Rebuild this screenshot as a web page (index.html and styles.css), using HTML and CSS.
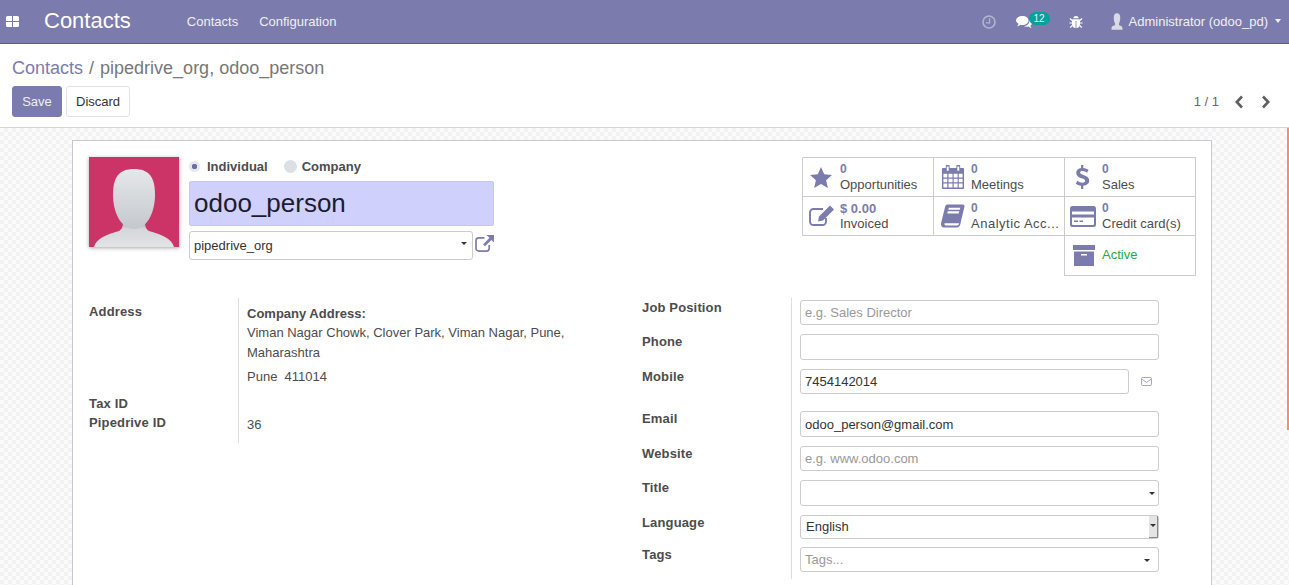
FILE: index.html
```html
<!DOCTYPE html>
<html lang="en">
<head>
    <meta charset="UTF-8">
    <meta name="viewport" content="width=device-width, initial-scale=1.0">
    <title>pipedrive_org, odoo_person - Odoo</title>
    <link rel="stylesheet" href="styles.css">
</head>
<body>
    <nav class="navbar">
        <svg class="apps-icon" viewBox="0 0 13 11"><path d="M0 1.500Q0 0 1.500 0H6V5H0ZM7 0H11.500Q13 0 13 1.500V5H7ZM0 6H6V11H1.500Q0 11 0 9.500ZM7 6H13V9.500Q13 11 11.500 11H7Z"/></svg>
        <span class="brand">Contacts</span>
        <a class="nav-link nav-first">Contacts</a>
        <a class="nav-link nav-second">Configuration</a>
        <div class="nav-right">
            <svg class="clock" viewBox="0 0 14 14"><circle cx="7" cy="7" r="6" fill="none" stroke="currentColor" stroke-width="1.600"/><path d="M7.600 3.200V7.800H4" fill="none" stroke="currentColor" stroke-width="1.300"/></svg>
            <span class="chat">
                <svg viewBox="0 0 16 14"><path d="M6.500 1C10 1 12.500 3 12.500 5.500S10 10 6.500 10C5.800 10 5 9.900 4.500 9.700 3.500 10.500 2.500 11 1 11.200 2 10.300 2.400 9.500 2.500 8.700 1 7.900 0 6.800 0 5.500 0 3 3 1 6.500 1Z" fill="#fff"/><path d="M13.600 4.500C15 5.300 16 6.500 16 7.900 16 9 15.300 10 14.300 10.700 14.400 11.500 14.900 12.300 15.700 13 14.300 12.800 13.200 12.300 12.400 11.600 11.800 11.800 11.200 11.800 10.500 11.800 9.500 11.800 8.600 11.500 7.800 11.100 11 11 13.800 8.800 13.600 4.500Z" fill="#fff"/></svg>
                <span class="badge">12</span>
            </span>
            <svg class="bug" viewBox="0 0 14 14"><path d="M4.300 3.300C4.500 1.800 5.600 1 7 1S9.500 1.800 9.700 3.300ZM3.800 4.200H10.200C11 4.200 11 5 11 6V9C11 11.500 9.500 13 7.400 13.200V6H6.600V13.200C4.500 13 3 11.500 3 9V6C3 5 3 4.200 3.800 4.200Z" fill="#fff"/><path d="M3 5.500 1 3.500M11 5.500 13 3.500M3 8H.5M11 8H13.500M3.300 10.500 1.200 12.700M10.700 10.500 12.800 12.700" stroke="#fff" stroke-width="1.200" fill="none"/></svg>
            <svg class="user-pic" viewBox="0 0 14 19"><path d="M7 0C9.800 0 10.800 2 10.800 5.500 10.800 8.500 10 10.500 9.300 12 9.100 13 9.500 14 11 14.500 12.500 15 13.500 15.500 13.500 19H.5C.5 15.500 1.500 15 3 14.500 4.500 14 4.900 13 4.700 12 4 10.500 3.200 8.500 3.200 5.500 3.200 2 4.200 0 7 0Z" fill="#e4e5ea"/></svg>
            <span class="user-name">Administrator (odoo_pd)</span>
            <span class="caret caret-white"></span>
        </div>
    </nav>

    <header class="control-panel">
        <div class="breadcrumb"><a>Contacts</a><span class="sep">/</span><span>pipedrive_org, odoo_person</span></div>
        <div class="cp-bottom">
            <div class="cp-buttons">
                <button class="btn btn-primary">Save</button>
                <button class="btn btn-default">Discard</button>
            </div>
            <div class="pager">
                <span>1 / 1</span>
                <svg viewBox="0 0 10 14"><path d="M8 1.500 2.800 7 8 12.500" fill="none" stroke="currentColor" stroke-width="2.600"/></svg>
                <svg viewBox="0 0 10 14"><path d="M2 1.500 7.200 7 2 12.500" fill="none" stroke="currentColor" stroke-width="2.600"/></svg>
            </div>
        </div>
    </header>

    <main class="content">
        <div class="sheet">
            <section class="top">
                <div class="avatar">
                    <svg viewBox="0 0 90 90"><defs><linearGradient id="skin" x1="0" y1="0" x2="0" y2="1"><stop offset="0" stop-color="#e6e8ea"/><stop offset="1" stop-color="#c4c8cd"/></linearGradient><linearGradient id="torso" x1="0" y1="0" x2="0" y2="1"><stop offset="0" stop-color="#a4a8b0"/><stop offset=".3" stop-color="#d4d6da"/><stop offset="1" stop-color="#e2e4e6"/></linearGradient></defs><path d="M5 90C7 82 16 78 30 74 33 72 34 70 34 64H56C56 70 57 72 60 74 74 78 83 82 85 90Z" fill="url(#torso)"/><path d="M45 12C60 12 66 20 66 38 66 55 58 72 45 72 32 72 24 55 24 38 24 20 30 12 45 12Z" fill="url(#skin)"/></svg>
                </div>
                <div class="title-block">
                    <div class="radios">
                        <span class="radio radio-on"></span><span class="radio-label">Individual</span>
                        <span class="radio radio-off"></span><span class="radio-label">Company</span>
                    </div>
                    <input class="name-input" type="text" value="odoo_person">
                    <div class="company-row">
                        <div class="company-select">pipedrive_org<span class="caret"></span></div>
                        <svg class="ext-link" viewBox="0 0 20 18"><path d="M15 10.500V14A3 3 0 0 1 12 17H4A3 3 0 0 1 1 14V6A3 3 0 0 1 4 3H10" fill="none" stroke="currentColor" stroke-width="1.800"/><path d="M12 0H20V8L17.300 5.300 10.500 12 8.500 10 15.300 2.800Z" fill="currentColor"/></svg>
                    </div>
                </div>
                <div class="button-box">
                    <div class="stat"><svg class="stat-icon stat-star" viewBox="0 0 24 23"><path d="M12 0 15.500 8 24 8.800 17.600 14.500 19.500 23 12 18.500 4.500 23 6.400 14.500 0 8.800 8.500 8Z"/></svg><div class="stat-info"><b>0</b><span>Opportunities</span></div></div>
                    <div class="stat"><svg class="stat-icon" viewBox="0 0 23 25"><path fill-rule="evenodd" d="M1 3H4V1.500A1.500 1.500 0 0 1 8 1.500V3H15V1.500A1.500 1.500 0 0 1 19 1.500V3H22Q23 3 23 4V24Q23 25 22 25H1Q0 25 0 24V4Q0 3 1 3ZM1.500 9V13H5.500V9ZM6.800 9V13H11V9ZM12.200 9V13H16.300V9ZM17.500 9V13H21.500V9ZM1.500 14.200V18H5.500V14.200ZM6.800 14.200V18H11V14.200ZM12.200 14.200V18H16.300V14.200ZM17.500 14.200V18H21.500V14.200ZM1.500 19.200V23.500H5.500V19.200ZM6.800 19.200V23.500H11V19.200ZM12.200 19.200V23.500H16.300V19.200ZM17.500 19.200V23.500H21.500V19.200ZM5 1.500V6H7V1.500ZM16 1.500V6H18V1.500Z"/></svg><div class="stat-info"><b>0</b><span>Meetings</span></div></div>
                    <div class="stat"><svg class="stat-icon stat-dollar" viewBox="0 0 14 25"><path d="M7.800 0V3C10 3.200 12 4 13.300 5L11.800 8C10.300 7 8.500 6.300 6.800 6.300 5.300 6.300 4.500 7 4.500 7.900 4.500 9 5.700 9.500 8 10.300 11.500 11.500 14 12.800 14 16.300 14 19.200 11.800 21 7.800 21.500V25H5.500V21.600C3.200 21.300 1.200 20.400 0 19.200L1.700 16.300C3.200 17.500 5 18.400 7 18.400 8.800 18.400 9.800 17.700 9.800 16.500 9.800 15.300 8.800 14.700 6.200 13.800 2.800 12.600.5 11.300.5 8 .5 5.300 2.500 3.500 5.500 3.100V0Z"/></svg><div class="stat-info"><b>0</b><span>Sales</span></div></div>
                    <div class="stat"><svg class="stat-icon stat-edit" viewBox="0 0 25 21"><path d="M17 12.500V16A3.500 3.500 0 0 1 13.500 19.500H4.500A3.500 3.500 0 0 1 1 16V7A3.500 3.500 0 0 1 4.500 3.500H14" fill="none" stroke="currentColor" stroke-width="1.900"/><path d="M21 0 25 4 14 15 9 16 10 11Z"/></svg><div class="stat-info"><b class="amount">$ 0.00</b><span>Invoiced</span></div></div>
                    <div class="stat"><svg class="stat-icon" viewBox="0 0 23 22"><path fill-rule="evenodd" d="M6 0H21Q23 0 22.500 2L18.500 19Q18 22 15 22H3Q0 22 0 19 0 18 .5 16L4 2Q4.500 0 6 0ZM7.500 3 7 5H18L18.500 3ZM6.500 6.500 6 8.500H17L17.500 6.500ZM3.500 18C3 19.500 3.500 20 5 20H15.500C16.500 20 17 19.500 17.300 18Z"/></svg><div class="stat-info"><b>0</b><span class="clipped">Analytic Acc...</span></div></div>
                    <div class="stat"><svg class="stat-icon stat-card" viewBox="0 0 26 21"><path fill-rule="evenodd" d="M2.500 0H23.500Q26 0 26 2.500V18.500Q26 21 23.500 21H2.500Q0 21 0 18.500V2.500Q0 0 2.500 0ZM2 5.500V8.500H24V5.500ZM2 11.500V18Q2 19 3 19H23Q24 19 24 18V11.500ZM4 14.500H8V16H4ZM9.500 14.500H13V16H9.500Z"/></svg><div class="stat-info"><b>0</b><span>Credit card(s)</span></div></div>
                    <div class="stat stat-active"><svg class="stat-icon stat-archive" viewBox="0 0 22 21"><path fill-rule="evenodd" d="M0 0H22V5H0ZM1 6.500H21V21H1ZM8 9V10.500H14V9Z"/></svg><div class="stat-info"><span class="active-text">Active</span></div></div>
                </div>
            </section>

            <section class="groups">
                <div class="group group-left">
                    <div class="labels">
                        <label class="label-address">Address</label>
                        <label class="label-tax">Tax ID</label>
                        <label>Pipedrive ID</label>
                    </div>
                    <div class="values">
                        <b>Company Address:</b>
                        <p class="address-line">Viman Nagar Chowk, Clover Park, Viman Nagar, Pune, Maharashtra</p>
                        <p class="city-line">Pune &nbsp;411014</p>
                        <p class="pipedrive-id">36</p>
                    </div>
                </div>
                <div class="group group-right">
                    <div class="labels">
                        <label class="lbl-tight">Job Position</label>
                        <label class="lbl-wide">Phone</label>
                        <label class="lbl-mobile">Mobile</label>
                        <label class="lbl-wide">Email</label>
                        <label class="lbl-tight">Website</label>
                        <label class="lbl-wide">Title</label>
                        <label class="lbl-lang">Language</label>
                        <label>Tags</label>
                    </div>
                    <div class="fields">
                        <input class="field field-short" type="text" placeholder="e.g. Sales Director">
                        <input class="field" type="text">
                        <div class="mobile-row">
                            <input class="field field-short" type="text" value="7454142014">
                            <svg class="sms" viewBox="0 0 12 10"><rect x=".5" y=".5" width="11" height="9" rx="1.300" fill="none" stroke="currentColor"/><path d="M1 2.500 6 6 11 2.500" fill="none" stroke="currentColor"/></svg>
                        </div>
                        <input class="field" type="text" value="odoo_person@gmail.com">
                        <input class="field field-short" type="text" placeholder="e.g. www.odoo.com">
                        <div class="field field-select"><span class="caret caret-small"></span></div>
                        <div class="field field-lang">English<span class="lang-arrow"><span class="caret caret-small"></span></span></div>
                        <div class="field field-short field-tags">Tags...<span class="caret"></span></div>
                    </div>
                </div>
            </section>
        </div>
    </main>
    <div class="edge-strip"></div>
</body>
</html>
```

FILE: styles.css
```css
* {
    box-sizing: border-box;
}
html, body {
    height: 100%;
}
body {
    margin: 0;
    overflow: hidden;
    font-family: "Liberation Sans", Arial, sans-serif;
    font-size: 13px;
    color: #4c4c4c;
    background: #fff;
}
svg {
    display: block;
    flex: none;
}

/* top bar */
.navbar {
    height: 44px;
    background: #7c7bad;
    border-bottom: 1px solid #5e5c8d;
    color: #f0eff6;
    display: flex;
    align-items: center;
    padding: 0 8px 0 6px;
}
.apps-icon {
    width: 13px;
    height: 11px;
    fill: #fff;
}
.brand {
    font-size: 22px;
    color: #fff;
    margin-left: 25px;
    margin-top: -2px;
}
.nav-link {
    margin-top: -1px;
}
.nav-first {
    margin-left: 56px;
}
.nav-second {
    margin-left: 21px;
}
.nav-right {
    margin-left: auto;
    display: flex;
    align-items: center;
}
.clock {
    width: 14px;
    height: 14px;
    color: #b5b5cf;
}
.chat {
    display: flex;
    margin-left: 20px;
    position: relative;
    width: 35px;
}
.chat svg {
    width: 16px;
    height: 14px;
    margin-top: 1px;
}
.badge {
    position: absolute;
    left: 13px;
    top: -2px;
    width: 21px;
    height: 13px;
    border-radius: 7px;
    background: #00a09d;
    color: #e6f5f4;
    font-size: 10px;
    line-height: 13px;
    text-align: center;
}
.bug {
    width: 14px;
    height: 14px;
    margin-left: 18px;
}
.user-pic {
    width: 12px;
    height: 17px;
    margin-left: 28px;
    opacity: .9;
}
.user-name {
    margin-left: 6px;
    margin-top: -1px;
}
.caret {
    display: inline-block;
    width: 0;
    height: 0;
    border-top: 4px solid #333;
    border-left: 3.5px solid transparent;
    border-right: 3.5px solid transparent;
}
.caret-white {
    border-top-color: #f0eff6;
    margin-left: 7px;
    margin-top: -2px;
}
.caret-small {
    border-top-width: 3px;
    border-left-width: 3px;
    border-right-width: 3px;
}

/* control panel */
.control-panel {
    height: 84px;
    padding: 12px 16px 0 12px;
    border-bottom: 1px solid #d3d3d3;
}
.breadcrumb {
    font-size: 18px;
    line-height: 24px;
    color: #777;
}
.breadcrumb a {
    color: #7c7bad;
}
.sep {
    margin: 0 6px 0 6px;
}
.cp-bottom {
    margin-top: 6px;
    display: flex;
    justify-content: space-between;
    align-items: center;
}
.cp-buttons {
    display: flex;
    gap: 4px;
}
.btn {
    height: 31px;
    font: inherit;
    border-radius: 3px;
    padding: 0 9px;
}
.btn-primary {
    width: 50px;
    background: #7c7bad;
    border: 1px solid #7c7bad;
    color: #eeeef5;
}
.btn-default {
    width: 64px;
    background: #fff;
    border: 1px solid #e2e2e2;
    color: #333;
}
.pager {
    display: flex;
    align-items: center;
    color: #666;
}
.pager span {
    margin-right: 15px;
}
.pager svg {
    width: 10px;
    height: 14px;
    margin-right: 17px;
    color: #5f5f5f;
}
.pager svg:last-child {
    margin-right: 2px;
}

/* form view */
.content {
    height: 458px;
    padding: 12px 0 0 72px;
    overflow: hidden;
    background-color: #fbfbfb;
    background-image:
        linear-gradient(45deg, #f3f3f3 25%, transparent 25%, transparent 75%, #f3f3f3 75%),
        linear-gradient(45deg, #f3f3f3 25%, transparent 25%, transparent 75%, #f3f3f3 75%);
    background-size: 8px 8px;
    background-position: 0 0, 4px 4px;
}
.sheet {
    width: 1140px;
    height: 600px;
    background: #fff;
    border: 1px solid #c8c8d3;
    padding: 16px 15px 0 16px;
}
.top {
    display: flex;
    align-items: flex-start;
}
.avatar {
    width: 90px;
    height: 90px;
    background: #cc3366;
    box-shadow: 0 1px 4px rgba(0, 0, 0, .35);
    overflow: hidden;
}
.avatar svg {
    width: 90px;
    height: 90px;
}
.title-block {
    width: 306px;
    margin-left: 10px;
}
.radios {
    display: flex;
    align-items: center;
    height: 19px;
    font-weight: bold;
    color: #4c4c4c;
}
.radio {
    width: 13px;
    height: 13px;
    border-radius: 50%;
    background: #dcdfe6;
    margin-right: 5px;
}
.radio-on {
    background: radial-gradient(circle, #6f6fa8 0 2.500px, #e7e8ee 3px);
    width: 11px;
    height: 11px;
    margin-right: 7px;
}
.radio-label {
    margin-right: 16px;
}
.name-input {
    display: block;
    width: 305px;
    height: 45px;
    margin-top: 5px;
    border: 1px solid #c6c6e8;
    border-radius: 2px;
    background: #cfd0fc;
    padding: 0 4px;
    font: 26px "Liberation Sans", Arial, sans-serif;
    color: #1c1c2c;
}
.company-row {
    display: flex;
    align-items: flex-start;
    margin-top: 5px;
}
.company-select {
    width: 284px;
    height: 29px;
    border: 1px solid #ccc;
    border-radius: 3px;
    padding: 0 4px;
    line-height: 27px;
    color: #333;
    display: flex;
    justify-content: space-between;
    align-items: center;
}
.company-select .caret {
    margin-bottom: 4px;
    margin-right: 1px;
    border-top-width: 3px;
    border-left-width: 3px;
    border-right-width: 3px;
}
.ext-link {
    width: 19px;
    height: 17px;
    margin-left: 2px;
    margin-top: 4px;
    color: #7c7bad;
}
.button-box {
    margin-left: auto;
    width: 394px;
    display: grid;
    grid-template-columns: repeat(3, 131px);
    grid-auto-rows: 39px;
    border-top: 1px solid #ccc;
    border-left: 1px solid transparent;
}
.stat {
    border-right: 1px solid #ccc;
    border-bottom: 1px solid #ccc;
    display: flex;
    align-items: center;
    position: relative;
}
.stat:nth-child(1),
.stat:nth-child(4) {
    border-left: 1px solid #ccc;
    margin-left: -1px;
}
.stat-active {
    grid-column: 3;
    border-left: 1px solid #ccc;
    margin-left: -1px;
    height: 40px;
}
.stat-icon {
    position: absolute;
    left: 7px;
    top: 7px;
    width: 24px;
    height: 24px;
    fill: #7c7bad;
    color: #7c7bad;
}
.stat-star {
    left: 7px;
    top: 9px;
    width: 22px;
    height: 21px;
}
.stat-dollar {
    left: 10px;
    width: 15px;
}
.stat-edit {
    left: 6px;
    width: 25px;
}
.stat-card {
    left: 5px;
    top: 9px;
    width: 26px;
    height: 21px;
}
.stat-archive {
    left: 8px;
    top: 9px;
    width: 22px;
    height: 21px;
}
.stat-info {
    margin-left: 37px;
    line-height: 15px;
    display: flex;
    flex-direction: column;
    white-space: nowrap;
}
.stat-info b {
    color: #7c7bad;
    font-size: 12px;
    line-height: 15px;
}
.stat-info .amount {
    font-size: 13px;
}
.clipped {
    letter-spacing: .5px;
}
.active-text {
    color: #28a745;
    margin-top: -2px;
}

/* field groups */
.groups {
    display: flex;
    margin-top: 23px;
}
.group {
    display: flex;
}
.group label {
    display: block;
    font-weight: bold;
    line-height: 15px;
    letter-spacing: .15px;
}
.group-left {
    width: 553px;
    height: 145px;
}
.group-left .labels {
    width: 149px;
    padding-top: 6px;
}
.label-address {
    margin-bottom: 77px;
}
.label-tax {
    margin-bottom: 4px;
}
.values {
    width: 338px;
    border-left: 1px solid #ddd;
    padding: 7px 0 0 8px;
    line-height: 20px;
}
.values b {
    display: block;
    line-height: 17px;
}
.values p {
    margin: 0;
}
.address-line {
    margin-top: 1px !important;
}
.city-line {
    margin-top: 4px !important;
}
.pipedrive-id {
    margin-top: 28px !important;
}
.group-right .labels {
    width: 149px;
    padding-top: 2px;
}
.lbl-tight {
    margin-bottom: 19px;
}
.lbl-wide {
    margin-bottom: 20px;
}
.lbl-mobile {
    margin-bottom: 27px;
}
.lbl-lang {
    margin-bottom: 17px;
}
.fields {
    border-left: 1px solid #ddd;
    padding: 2px 0 7px 8px;
    width: 368px;
    display: flex;
    flex-direction: column;
    gap: 9px;
}
.field {
    display: block;
    width: 359px;
    height: 26px;
    border: 1px solid #ccc;
    border-radius: 3px;
    padding: 0 4px;
    font: 13px "Liberation Sans", Arial, sans-serif;
    line-height: 24px;
    color: #333;
    background: #fff;
    flex: none;
}
.field-short {
    height: 25px;
    line-height: 23px;
}
.field::placeholder,
.field-tags {
    color: #999;
}
.mobile-row {
    display: flex;
    align-items: center;
    margin-bottom: 8px;
}
.mobile-row .field {
    width: 329px;
}
.sms {
    width: 11px;
    height: 9px;
    margin-left: 12px;
    color: #9a99c2;
}
.field-select {
    display: flex;
    justify-content: flex-end;
    align-items: center;
    padding-right: 3px;
}
.field-lang {
    height: 24px;
    line-height: 22px;
    padding: 0 0 0 5px;
    display: flex;
    justify-content: space-between;
    margin-bottom: -1px;
}
.lang-arrow {
    width: 9px;
    height: 22px;
    background: #e4e4e4;
    border-right: 1px solid #888;
    border-bottom: 1px solid #888;
    display: flex;
    justify-content: center;
    padding-top: 8px;
}
.field-tags {
    display: flex;
    justify-content: space-between;
    align-items: center;
    padding-right: 8px;
}
.field-tags .caret {
    margin-top: 2px;
    border-top-width: 3px;
    border-left-width: 3px;
    border-right-width: 3px;
}

.edge-strip {
    position: absolute;
    right: 0;
    top: 128px;
    width: 2px;
    height: 302px;
    background: #f0916c;
}
```
